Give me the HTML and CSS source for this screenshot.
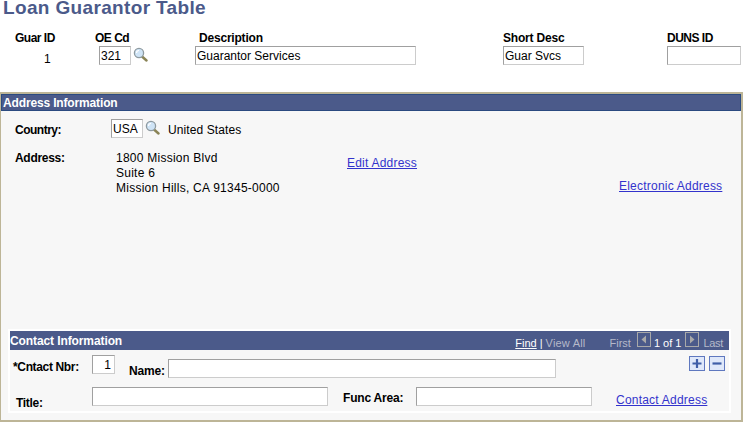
FILE: index.html
```html
<!DOCTYPE html>
<html lang="en">
<head>
  <meta charset="UTF-8">
  <meta name="viewport" content="width=device-width, initial-scale=1.0">
  <title>Loan Guarantor Table</title>
  <link rel="stylesheet" href="styles.css">
</head>
<body>
  <svg class="defs" width="0" height="0">
    <symbol id="lens" viewBox="0 0 15 15">
      <path d="M9 9.5l4.5 4" stroke="#8a8456" stroke-width="2.4" stroke-linecap="round"/>
      <circle cx="6" cy="6" r="4.6" fill="#cfe4f6" stroke="#8e9aa0" stroke-width="1.3"/>
      <path d="M3.5 6a2.5 2.5 0 0 1 2.5-2.5" fill="none" stroke="#fff" stroke-width="1.2"/>
    </symbol>
  </svg>

  <h1 class="page-title">Loan Guarantor Table</h1>

  <div class="top-fields">
    <div class="col col-id">
      <label>Guar ID</label>
      <span class="id-value">1</span>
    </div>
    <div class="col col-oe">
      <label>OE Cd</label>
      <div class="lookup">
        <input class="field w-32" value="321">
        <svg class="lens"><use href="#lens"/></svg>
      </div>
    </div>
    <div class="col col-desc">
      <label>Description</label>
      <input class="field w-221" value="Guarantor Services">
    </div>
    <div class="col col-short">
      <label>Short Desc</label>
      <input class="field w-81" value="Guar Svcs">
    </div>
    <div class="col col-duns">
      <label>DUNS ID</label>
      <input class="field w-74" value="">
    </div>
  </div>

  <section class="panel">
    <h2 class="panel-head">Address Information</h2>

    <div class="address-area">
      <div class="country-row">
        <label>Country:</label>
        <input class="field w-32" value="USA">
        <svg class="lens"><use href="#lens"/></svg>
        <span class="country-name">United States</span>
      </div>
      <div class="address-row">
        <label>Address:</label>
        <div class="address-lines">
          1800 Mission Blvd<br>
          Suite 6<br>
          Mission Hills, CA 91345-0000
        </div>
        <a class="edit-link" href="#">Edit Address</a>
        <a class="electronic-link" href="#">Electronic Address</a>
      </div>
    </div>

    <div class="contact-box">
      <div class="contact-head">
        <span class="contact-title">Contact Information</span>
        <div class="nav">
          <a class="nav-find" href="#">Find</a>
          <span class="nav-sep">|</span>
          <span class="nav-off nav-viewall">View All</span>
          <span class="nav-off nav-first">First</span>
          <svg class="nav-btn" viewBox="0 0 14 15"><rect x=".5" y=".5" width="13" height="14" fill="none" stroke="#a9a9a9"/><path d="M9 3.5v8L4.5 7.5z" fill="#a9a9a9"/></svg>
          <span class="nav-count">1 of 1</span>
          <svg class="nav-btn" viewBox="0 0 14 15"><rect x=".5" y=".5" width="13" height="14" fill="none" stroke="#a9a9a9"/><path d="M5 3.5v8l4.5-4z" fill="#a9a9a9"/></svg>
          <span class="nav-off nav-last">Last</span>
        </div>
      </div>
      <div class="contact-body">
        <div class="contact-row row-one">
          <label class="lbl-nbr">*Cntact Nbr:</label>
          <input class="field w-23 num" value="1">
          <label class="lbl-name">Name:</label>
          <input class="field w-388" value="">
          <div class="row-btns">
            <button class="row-btn" type="button"><svg viewBox="0 0 14 13"><path d="M2.5 6.5h9M7 2v9" stroke="#3f5ea8" stroke-width="2.2"/></svg></button>
            <button class="row-btn" type="button"><svg viewBox="0 0 14 13"><path d="M2.5 6.5h9" stroke="#3f5ea8" stroke-width="2.2"/></svg></button>
          </div>
        </div>
        <div class="contact-row row-two">
          <label class="lbl-title">Title:</label>
          <input class="field w-236" value="">
          <label class="lbl-func">Func Area:</label>
          <input class="field w-176" value="">
          <a class="contact-link" href="#">Contact Address</a>
        </div>
      </div>
    </div>
  </section>
</body>
</html>
```

FILE: styles.css
```css
html, body {
  margin: 0;
  padding: 0;
  height: 423px;
  overflow: hidden;
  background: #fff;
}
body {
  font-family: "Liberation Sans", Arial, sans-serif;
  font-size: 12px;
  color: #000;
}
.defs {
  display: block;
  height: 0;
}
label {
  font-weight: bold;
  line-height: 14px;
  letter-spacing: -0.2px;
}
a {
  color: #3333cc;
  letter-spacing: 0.22px;
}
.page-title {
  margin: 0;
  padding-left: 3px;
  height: 30px;
  font-size: 19px;
  line-height: 16px;
  letter-spacing: 0.35px;
  color: #4b5a8a;
}

/* top fields */
.top-fields {
  display: flex;
  height: 62px;
}
.col {
  display: flex;
  flex-direction: column;
}
.col label {
  height: 15px;
  padding-top: 1px;
}
.col-id {
  width: 99px;
  padding-left: 15px;
  box-sizing: border-box;
}
.col-id label,
.col-duns label {
  letter-spacing: -0.5px;
}
.id-value {
  padding: 6px 0 0 29px;
}
.col-oe {
  width: 96px;
}
.col-oe label {
  margin-left: -4px;
  letter-spacing: -0.5px;
}
.col-desc {
  width: 308px;
}
.col-desc label {
  margin-left: 4px;
}
.col-short {
  width: 164px;
}
.lookup {
  display: flex;
  align-items: flex-start;
}
.field {
  box-sizing: border-box;
  height: 19px;
  padding: 0 1px;
  margin: 0;
  border: 1px solid;
  border-color: #a0a0a0 #cccccc #cccccc #a0a0a0;
  background: #fff;
  font-family: inherit;
  font-size: 12px;
  color: #000;
  outline: none;
}
.w-23 { width: 23px; }
.w-32 { width: 32px; }
.w-74 { width: 74px; }
.w-81 { width: 81px; }
.w-176 { width: 176px; }
.w-221 { width: 221px; }
.w-236 { width: 236px; }
.w-388 { width: 388px; }
.num {
  text-align: right;
  padding-right: 3px;
}
.lens {
  width: 15px;
  height: 15px;
  margin: 1px 0 0 2px;
  flex: none;
}

/* address panel */
.panel {
  box-sizing: border-box;
  height: 330px;
  border: solid #bdb597;
  border-width: 2px 2px 2px 1px;
  background: #f7f7f7;
}
.panel-head {
  box-sizing: border-box;
  height: 17px;
  margin: 0;
  padding-left: 1px;
  border: 1px solid #2b4a80;
  background: #4b5a8a;
  color: #fff;
  font-size: 12px;
  line-height: 16px;
  letter-spacing: -0.15px;
}
.address-area {
  height: 218px;
}
.country-row {
  display: flex;
  align-items: flex-start;
  padding: 8px 0 0 14px;
}
.country-row label {
  width: 96px;
  padding-top: 4px;
  letter-spacing: -0.5px;
}
.country-name {
  margin-left: 8px;
  padding-top: 4px;
  letter-spacing: 0.1px;
}
.address-row {
  display: flex;
  align-items: flex-start;
  padding: 13px 0 0 14px;
  line-height: 15px;
}
.address-row label {
  width: 101px;
  letter-spacing: -0.3px;
}
.address-lines {
  width: 231px;
  letter-spacing: 0.25px;
}
.edit-link {
  width: 272px;
  padding-top: 5px;
}
.electronic-link {
  padding-top: 28px;
}

/* contact box */
.contact-box {
  box-sizing: border-box;
  width: 723px;
  height: 84px;
  margin-left: 7px;
  border: 2px solid #fff;
  background: #f7f7f7;
}
.contact-head {
  display: flex;
  justify-content: space-between;
  height: 19px;
  background: #4b5a8a;
}
.contact-title {
  color: #fff;
  font-weight: bold;
  line-height: 20px;
  letter-spacing: -0.1px;
}
.nav {
  display: flex;
  align-items: flex-start;
  padding-right: 6px;
  font-size: 11px;
  line-height: 24px;
  height: 19px;
  color: #fff;
}
.nav-find {
  color: #fff;
  letter-spacing: 0;
}
.nav-sep {
  margin: 0 3px;
}
.nav-off {
  color: #b5b9c9;
}
.nav-viewall {
  letter-spacing: 0.2px;
}
.nav-first {
  margin: 0 6px 0 24px;
}
.nav-btn {
  width: 14px;
  height: 15px;
  margin-top: 1px;
}
.nav-count {
  margin: 0 4px 0 3px;
}
.nav-last {
  margin-left: 4px;
  letter-spacing: -0.3px;
}
.contact-row {
  display: flex;
  align-items: flex-start;
}
.row-one {
  height: 37px;
  padding-top: 5px;
  box-sizing: border-box;
}
.lbl-nbr {
  width: 82px;
  padding: 5px 0 0 3px;
  box-sizing: border-box;
  letter-spacing: -0.35px;
}
.lbl-name {
  width: 39px;
  margin-left: 14px;
  padding-top: 9px;
}
.row-one .w-388 {
  margin-top: 4px;
}
.row-btns {
  display: flex;
  gap: 4px;
  margin: 1px 0 0 133px;
}
.row-btn {
  width: 16px;
  height: 15px;
  padding: 0;
  border: 1px solid #5f78bf;
  background: #dfe8fa;
}
.row-btn svg {
  display: block;
  width: 14px;
  height: 13px;
}
.lbl-title {
  width: 82px;
  padding: 9px 0 0 6px;
  box-sizing: border-box;
  flex: none;
  letter-spacing: -0.3px;
}
.lbl-func {
  width: 73px;
  margin-left: 15px;
  padding-top: 4px;
}
.contact-link {
  margin-left: 24px;
  padding-top: 6px;
}
```
